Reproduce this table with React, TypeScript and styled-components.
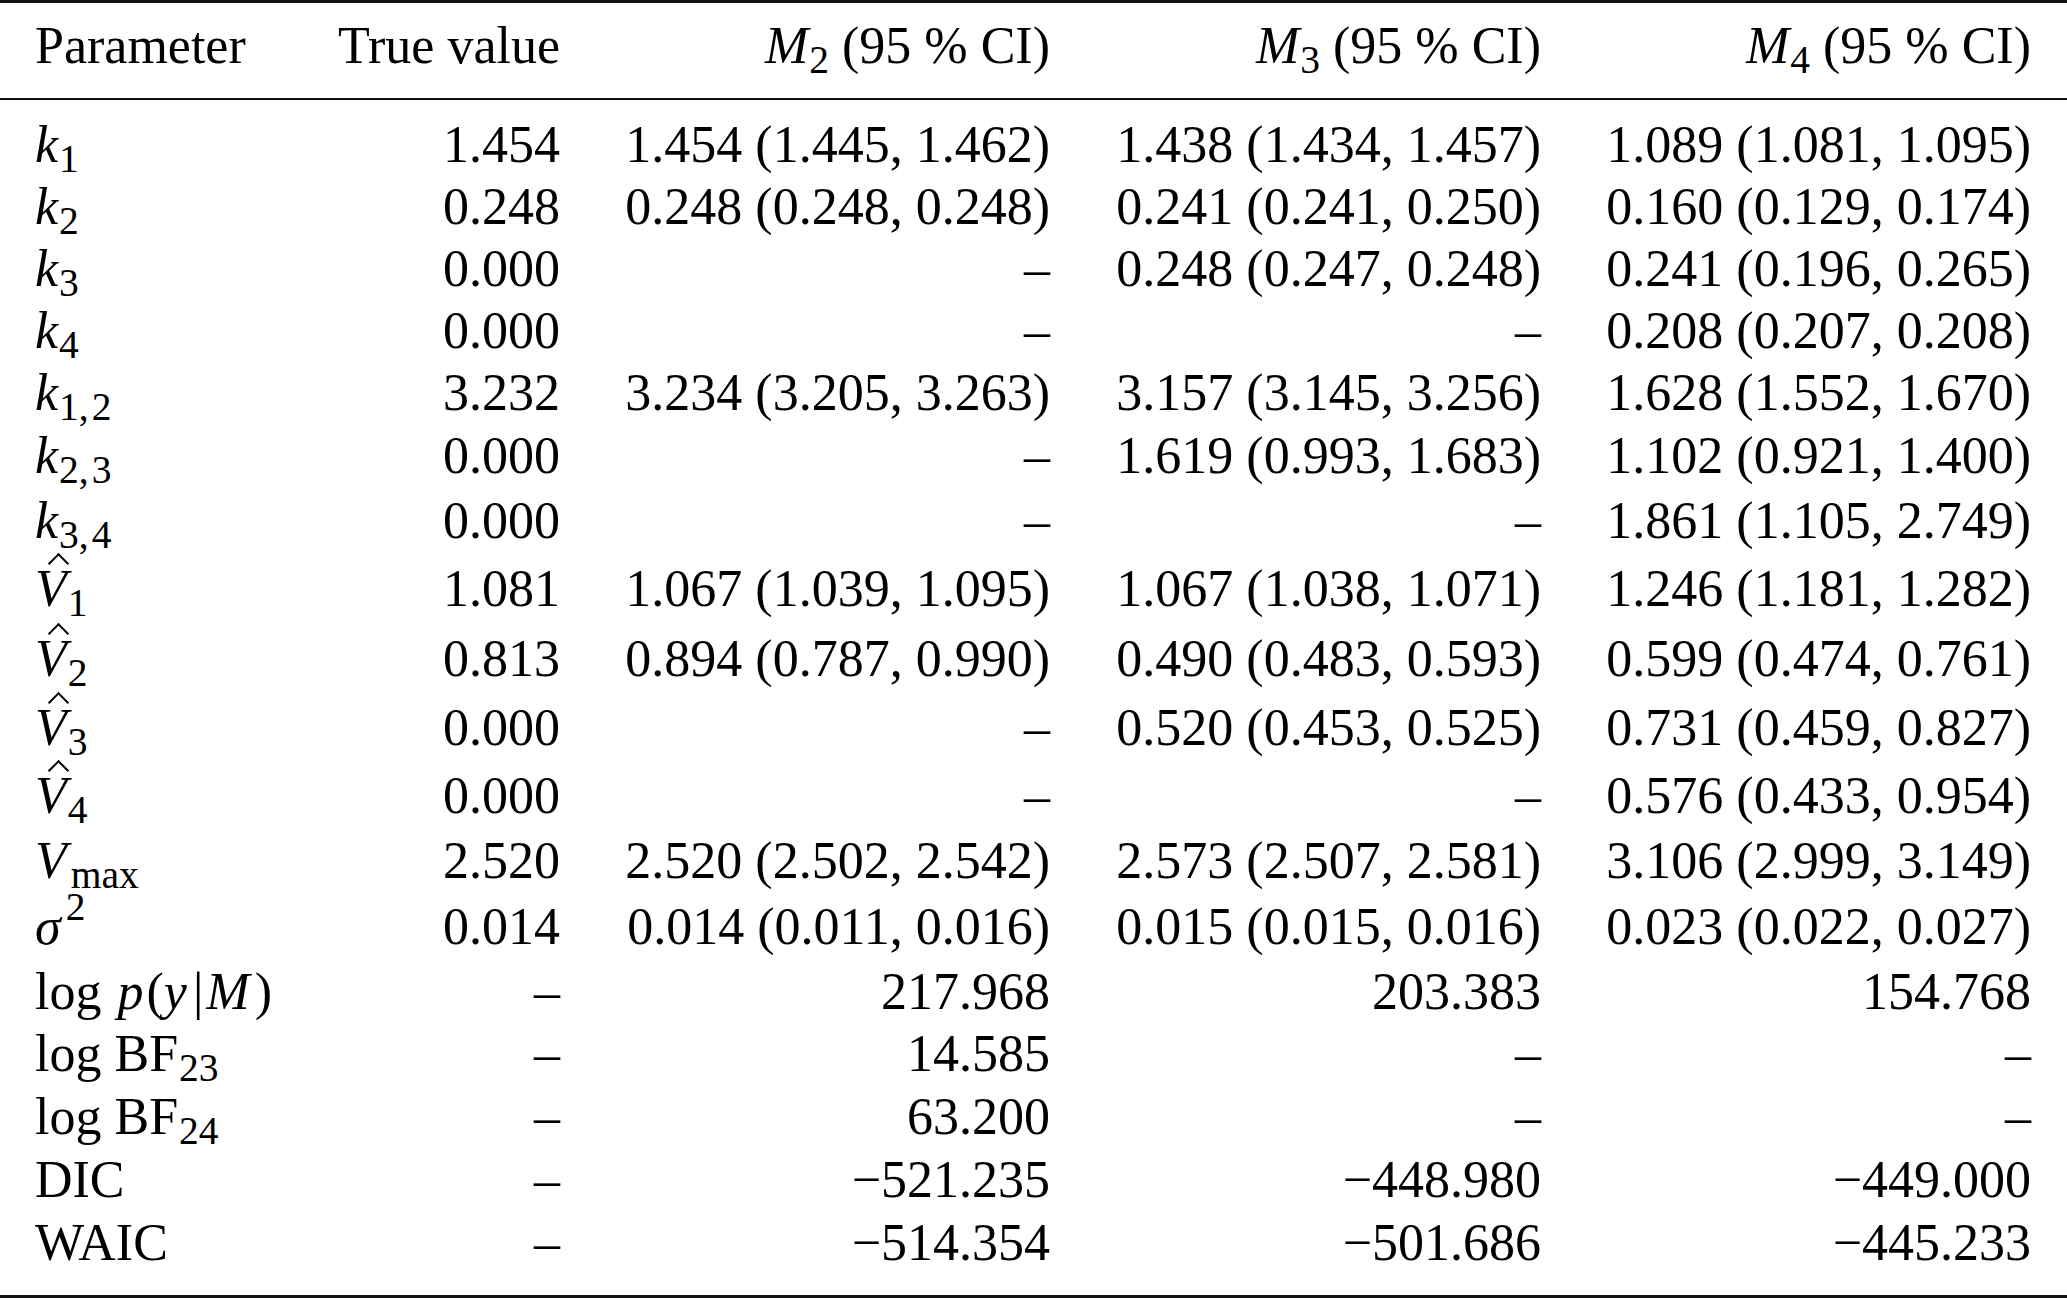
import React from "react";
import styled, { createGlobalStyle } from "styled-components";

const Global = createGlobalStyle`
  html, body { margin: 0; padding: 0; background: #ffffff; }
  body { width: 2067px; height: 1298px; overflow: hidden; }
`;

const Table = styled.div`
  width: 2067px;
  font-family: "Liberation Serif", "Times New Roman", serif;
  font-size: 52px;
  color: #000;
`;

const Rule = styled.div<{ $w: number }>`
  height: ${(p) => p.$w}px;
  background: #111;
`;

const Row = styled.div<{ $pt?: number; $pb?: number }>`
  display: grid;
  grid-template-columns: 255px 270px 490px 491px 490px;
  padding: ${(p) => p.$pt ?? 0}px 36px ${(p) => p.$pb ?? 0}px 35px;
  line-height: 62px;
  white-space: nowrap;
`;

const Body = styled.div`
  padding: 13.5px 0 21.5px;
`;

const Cell = styled.div<{ $left?: boolean }>`
  text-align: ${(p) => (p.$left ? "left" : "right")};
`;

const It = styled.span<{ $r?: number; $l?: number }>`
  font-style: italic;
  margin-right: ${(p) => p.$r ?? 0}px;
  margin-left: ${(p) => p.$l ?? 0}px;
`;

const Sub = styled.span<{ $l?: number }>`
  font-size: 0.76em;
  vertical-align: -0.26em;
  line-height: 0;
  margin-left: ${(p) => p.$l ?? 1}px;
`;

const Sup = styled.span`
  font-size: 0.76em;
  vertical-align: 0.6em;
  line-height: 0;
  margin-left: 5px;
`;

const HatBase = styled.span`
  position: relative;
  display: inline-block;
  font-style: italic;
`;

const Hat = styled.span`
  position: absolute;
  left: 16px;
  top: -2px;
  width: 13px;
  height: 13px;
  border-top: 2px solid #000;
  border-left: 2px solid #000;
  transform: rotate(45deg);
`;

const Gap = styled.span<{ $w: number }>`
  display: inline-block;
  width: ${(p) => p.$w}px;
`;

const Comma = styled.span`
  margin-right: 3px;
`;

const VHat = ({ n }: { n: string }) => (
  <>
    <HatBase>
      V
      <Hat />
    </HatBase>
    <Sub>{n}</Sub>
  </>
);

const K = ({ a, b }: { a: string; b?: string }) => (
  <>
    <It>k</It>
    <Sub>
      {a}
      {b && (
        <>
          <Comma>,</Comma>
          {b}
        </>
      )}
    </Sub>
  </>
);

const D = "–";

type R = { label: React.ReactNode; vals: string[]; pt?: number };

const rows: R[] = [
  { label: <K a="1" />, vals: ["1.454", "1.454 (1.445, 1.462)", "1.438 (1.434, 1.457)", "1.089 (1.081, 1.095)"] },
  { label: <K a="2" />, vals: ["0.248", "0.248 (0.248, 0.248)", "0.241 (0.241, 0.250)", "0.160 (0.129, 0.174)"] },
  { label: <K a="3" />, vals: ["0.000", D, "0.248 (0.247, 0.248)", "0.241 (0.196, 0.265)"] },
  { label: <K a="4" />, vals: ["0.000", D, D, "0.208 (0.207, 0.208)"] },
  { label: <K a="1" b="2" />, vals: ["3.232", "3.234 (3.205, 3.263)", "3.157 (3.145, 3.256)", "1.628 (1.552, 1.670)"] },
  { label: <K a="2" b="3" />, pt: 1, vals: ["0.000", D, "1.619 (0.993, 1.683)", "1.102 (0.921, 1.400)"] },
  { label: <K a="3" b="4" />, pt: 3, vals: ["0.000", D, D, "1.861 (1.105, 2.749)"] },
  { label: <VHat n="1" />, pt: 6, vals: ["1.081", "1.067 (1.039, 1.095)", "1.067 (1.038, 1.071)", "1.246 (1.181, 1.282)"] },
  { label: <VHat n="2" />, pt: 8, vals: ["0.813", "0.894 (0.787, 0.990)", "0.490 (0.483, 0.593)", "0.599 (0.474, 0.761)"] },
  { label: <VHat n="3" />, pt: 7, vals: ["0.000", D, "0.520 (0.453, 0.525)", "0.731 (0.459, 0.827)"] },
  { label: <VHat n="4" />, pt: 6, vals: ["0.000", D, D, "0.576 (0.433, 0.954)"] },
  {
    label: (
      <>
        <It>V</It>
        <Sub $l={4}>max</Sub>
      </>
    ),
    pt: 3,
    vals: ["2.520", "2.520 (2.502, 2.542)", "2.573 (2.507, 2.581)", "3.106 (2.999, 3.149)"],
  },
  {
    label: (
      <>
        <It>σ</It>
        <Sup>2</Sup>
      </>
    ),
    pt: 4,
    vals: ["0.014", "0.014 (0.011, 0.016)", "0.015 (0.015, 0.016)", "0.023 (0.022, 0.027)"],
  },
  {
    label: (
      <>
        log
        <Gap $w={16} />
        <It $r={3}>p</It>(<It $r={4}>y</It>
        <Gap $w={2} />|<Gap $w={3} />
        <It $r={5}>M</It>)
      </>
    ),
    pt: 3,
    vals: [D, "217.968", "203.383", "154.768"],
  },
  {
    label: (
      <>
        log BF<Sub>23</Sub>
      </>
    ),
    vals: [D, "14.585", D, D],
  },
  {
    label: (
      <>
        log BF<Sub>24</Sub>
      </>
    ),
    pt: 1,
    vals: [D, "63.200", D, D],
  },
  { label: "DIC", pt: 1, vals: [D, "−521.235", "−448.980", "−449.000"] },
  { label: "WAIC", pt: 1, vals: [D, "−514.354", "−501.686", "−445.233"] },
];

const ModelHead = ({ n }: { n: string }) => (
  <>
    <It>M</It>
    <Sub>{n}</Sub> (95 % CI)
  </>
);

export default function App() {
  return (
    <>
      <Global />
      <Table>
        <Rule $w={3} />
        <Row $pt={12} $pb={21}>
          <Cell $left>Parameter</Cell>
          <Cell>True value</Cell>
          <Cell>
            <ModelHead n="2" />
          </Cell>
          <Cell>
            <ModelHead n="3" />
          </Cell>
          <Cell>
            <ModelHead n="4" />
          </Cell>
        </Row>
        <Rule $w={2} />
        <Body>
          {rows.map((r, i) => (
            <Row key={i} $pt={r.pt}>
              <Cell $left>{r.label}</Cell>
              {r.vals.map((v, j) => (
                <Cell key={j}>{v}</Cell>
              ))}
            </Row>
          ))}
        </Body>
        <Rule $w={3} />
      </Table>
    </>
  );
}
